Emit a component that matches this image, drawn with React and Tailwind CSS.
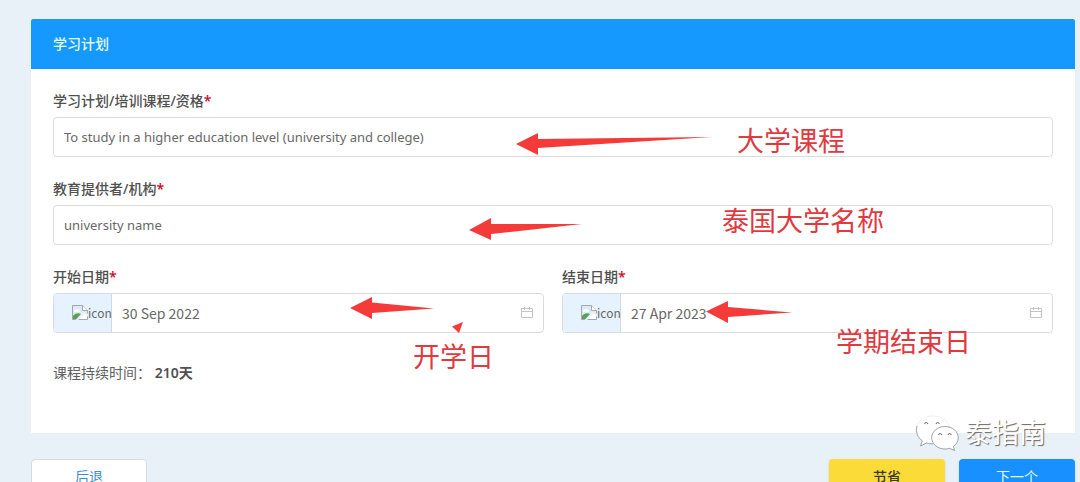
import React, { useState } from "react";

const Arrow = ({ points, width, height = 22, className }) => (
  <svg
    aria-hidden="true"
    width={width}
    height={height}
    viewBox={`0 0 ${width} ${height}`}
    className={`absolute pointer-events-none ${className}`}
  >
    <polygon points={points} fill="#f43b3a" />
  </svg>
);

const Note = ({ className, children }) => (
  <span
    className={`absolute pointer-events-none whitespace-nowrap text-[27px] leading-8 text-[#e0393f] ${className}`}
  >
    {children}
  </span>
);

const Label = ({ htmlFor, children }) => (
  <label
    htmlFor={htmlFor}
    className="block text-sm leading-6 font-medium text-[#505050]"
  >
    {children}
    <span className="text-[#d0021b]">*</span>
  </label>
);

const BrokenImage = () => (
  <svg width="16" height="16" viewBox="0 0 16 16" className="shrink-0">
    <path d="M0.5 0.5h10l5 5v4l-4-3.5-9 9.500h-2z" fill="#dce9f7" />
    <path d="M2 6.500c0-1.600 1.200-2.500 2.500-2 .8-1 2.700-.6 2.800 1 .9.200 1 1 .5 1.500H2z" fill="#fff" />
    <path d="M1 14.500v-3.500c2-2.500 5-3.500 8-2l-5 5.500z" fill="#5aa05a" />
    <path d="M7 14.500l6-6 2 2v4z" fill="#fff" />
    <path d="M3.500 14.500h-3v-14h10l5 5v3M6.500 14.500h9v-3" fill="none" stroke="#a3a8ad" />
    <path d="M10.500 0.500v5h5" fill="#fff" stroke="#a3a8ad" />
  </svg>
);

const CalendarIcon = () => (
  <svg width="12" height="12" viewBox="0 0 12 12" fill="none" stroke="#c4c4c4">
    <path d="M0.500 1.500h11v9h-11zM0.500 4.500h11M3.500 0v3M8.500 0v3" />
  </svg>
);

const TextField = ({ id, label, value, onChange, children }) => (
  <div className="relative">
    <Label htmlFor={id}>{label}</Label>
    <input
      id={id}
      value={value}
      onChange={onChange}
      className="mt-1 block h-10 w-full rounded border border-[#dcdcdc] bg-white px-2.5 text-[13px] text-[#686868] outline-none focus:border-[#1699ff]"
    />
    {children}
  </div>
);

const DateField = ({ id, label, value, onChange, children }) => (
  <div className="relative min-w-0">
    <Label htmlFor={id}>{label}</Label>
    <div className="mt-1 flex h-10 rounded border border-[#d9dcdf] bg-white">
      <div className="flex w-[58px] shrink-0 items-center rounded-l-[3px] border-r border-[#d0dae3] bg-[#e6f3fe] pl-[18px] font-['Noto_Sans_CJK_SC',sans-serif] text-xs text-[#686868]">
        <BrokenImage />
        icon
      </div>
      <input
        id={id}
        value={value}
        onChange={onChange}
        className="min-w-0 flex-1 px-2.5 font-['Noto_Sans_CJK_SC',sans-serif] text-sm text-[#686868] outline-none"
      />
      <div className="flex items-center pr-2.5">
        <CalendarIcon />
      </div>
    </div>
    {children}
  </div>
);

const Watermark = () => (
  <div className="absolute right-[29px] -bottom-[18px] flex items-center gap-1.5 pointer-events-none">
    <svg width="44" height="36" viewBox="0 0 44 36" fill="#fff" strokeWidth="0.8">
      <path
        d="M18 1C8.500 1 1 7.200 1 15c0 4.500 2.500 8.300 6.300 10.800L5.500 31l6-3c2 .6 4.200.9 6.500.9 9.500 0 17-6.200 17-14S27.500 1 18 1z"
        stroke="#ececec"
      />
      <path
        d="M2 11C.5 17 2.500 22.500 7.300 25.800L5.500 31l6-3c2 .6 4.200.9 6.500.9"
        fill="none"
        stroke="#909090"
      />
      <path
        d="M30 11.500c-7.500 0-13.300 5-13.300 11.200S22.500 34 30 34c1.600 0 3.200-.2 4.600-.7l5 2.200-1.300-4c3-2.100 5-5.200 5-8.800 0-6.200-5.900-11.200-13.300-11.200z"
        stroke="#8d8d8d"
      />
      <path
        d="M9.500 9q1.500-3 3.500 0M21 9q1.500-3 3.500 0M23.500 20q1.500-3 3.500 0M33 20q1.500-3 3.500 0"
        fill="none"
        stroke="#777"
        strokeWidth="1.200"
      />
    </svg>
    <span className="text-[27px] leading-9 text-white [text-shadow:1px_1px_1px_#666]">
      泰指南
    </span>
  </div>
);

const App = () => {
  const [form, setForm] = useState({
    plan: "To study in a higher education level (university and college)",
    provider: "university name",
    start: "30 Sep 2022",
    end: "27 Apr 2023",
  });

  const update = (key) => (e) => setForm({ ...form, [key]: e.target.value });

  return (
    <div className="h-screen overflow-hidden bg-[#e8f0f8] pt-[19px] pr-[5px] pl-[31px] font-['Noto_Sans','Noto_Sans_CJK_SC',sans-serif]">
      <form onSubmit={(e) => e.preventDefault()}>
        <section className="relative bg-white">
          {/* Header */}
          <h1 className="rounded-t-xs bg-[#1699ff] px-[22px] text-sm leading-[50px] font-medium text-[#e2faff]">
            学习计划
          </h1>

          {/* Fields */}
          <div className="space-y-5 px-[22px] pt-5 pb-12">
            <TextField
              id="plan"
              label="学习计划/培训课程/资格"
              value={form.plan}
              onChange={update("plan")}
            >
              <Arrow
                width={196}
                points="0,11 22,0 22,6 196,4 22,15 22,22"
                className="top-11 left-[463px]"
              />
              <Note className="top-9 left-[684px]">大学课程</Note>
            </TextField>

            <TextField
              id="provider"
              label="教育提供者/机构"
              value={form.provider}
              onChange={update("provider")}
            >
              <Arrow
                width={113}
                points="0,12 22,0 22,6 113,6 22,16 22,22"
                className="top-[41px] left-[416px]"
              />
              <Note className="top-7 left-[669px]">泰国大学名称</Note>
            </TextField>

            <div className="grid grid-cols-2 gap-[18px]">
              <DateField
                id="start"
                label="开始日期"
                value={form.start}
                onChange={update("start")}
              >
                <Arrow
                  width={84}
                  points="0,11 22,0 22,5.500 84,11.500 22,16 22,22"
                  className="top-8 left-[297px]"
                />
                <Arrow
                  width={12}
                  height={12}
                  points="0,4.500 11,0 7,11"
                  className="top-[57px] left-[399px]"
                />
                <Note className="top-[76px] left-[360px]">开学日</Note>
              </DateField>
              <DateField
                id="end"
                label="结束日期"
                value={form.end}
                onChange={update("end")}
              >
                <Arrow
                  width={86}
                  points="0,10.500 22,0 22,6 86,11.500 22,16 22,22"
                  className="top-9 left-[144px]"
                />
                <Note className="top-[61px] left-[274px]">学期结束日</Note>
              </DateField>
            </div>

            <p className="pt-2 text-sm leading-6 text-[#606060]">
              课程持续时间：{" "}
              <b className="font-semibold text-[#505050]">210天</b>
            </p>
          </div>

          <Watermark />
        </section>

        {/* Actions */}
        <div className="mt-[26px] flex gap-3.5">
          <button
            type="button"
            className="mr-auto h-9 w-[116px] rounded border border-[#d5dce3] bg-white text-sm text-[#3f8fc4]"
          >
            后退
          </button>
          <button
            type="button"
            className="h-9 w-[116px] rounded bg-[#fadb37] text-sm font-medium text-[#3a3a2a] shadow"
          >
            节省
          </button>
          <button
            type="submit"
            className="h-9 w-[116px] rounded bg-[#1890ff] text-sm text-[#e2faff] shadow"
          >
            下一个
          </button>
        </div>
      </form>
    </div>
  );
};

export default App;
